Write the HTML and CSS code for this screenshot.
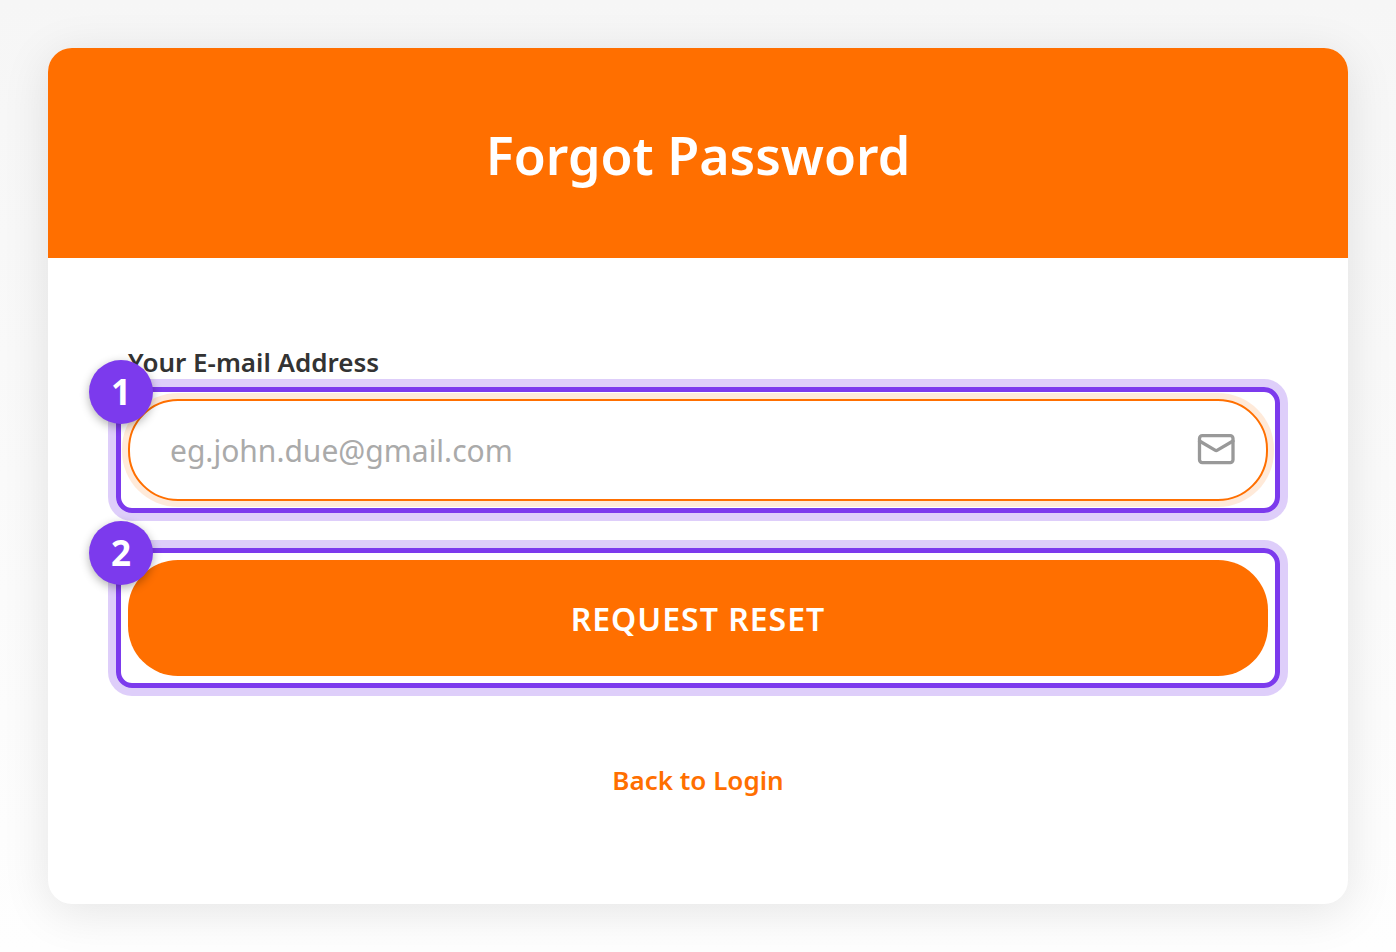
FILE: index.html
```html
<!DOCTYPE html>
<html lang="en">
<head>
    <meta charset="UTF-8">
    <meta name="viewport" content="width=device-width, initial-scale=1.0">
    <title>Forgot Password</title>
    <link rel="stylesheet" href="styles.css">
</head>
<body>
    <main class="card">
        <header class="card-header">
            <h1>Forgot Password</h1>
        </header>

        <form class="card-body">
            <label for="email">Your E-mail Address</label>
            <div class="step">
                <input type="email" id="email" name="email" placeholder="eg.john.due@gmail.com">
                <svg class="mail-icon" viewBox="0 0 40 32" fill="none" stroke="currentColor" stroke-width="3.300" stroke-linecap="round" stroke-linejoin="round" aria-hidden="true">
                    <rect x="3.500" y="2.600" width="33.500" height="27" rx="2.800"/>
                    <path d="M3.500 8 L19 17.200 Q20.200 18 21.400 17.200 L37 8"/>
                </svg>
                <div class="step-frame"><span class="step-number">1</span></div>
            </div>

            <div class="step">
                <button type="submit">REQUEST RESET</button>
                <div class="step-frame"><span class="step-number">2</span></div>
            </div>

            <a class="back-link" href="/login">Back to Login</a>
        </form>
    </main>
</body>
</html>
```
FILE: styles.css
```css
* {
    box-sizing: border-box;
}

body {
    margin: 0;
    padding: 48px;
    min-height: 100vh;
    background: linear-gradient(#f6f6f6, #fefefe);
    font-family: "Segoe UI", "Noto Sans", sans-serif;
    color: #333333;
}

.card {
    background-color: #ffffff;
    border-radius: 24px;
    overflow: hidden;
    box-shadow: 0 8px 48px rgba(0, 0, 0, 0.1);
}

.card-header {
    background-color: #ff6f00;
    color: #ffffff;
    padding: 66px 48px 62px;
    text-align: center;
}

h1 {
    margin: 0;
    font-size: 52px;
    font-weight: 600;
    line-height: 82px;
}

.card-body {
    display: flex;
    flex-direction: column;
    padding: 84px 80px 104px;
}

label {
    margin-bottom: 17px;
    font-size: 26px;
    font-weight: 600;
    line-height: 40px;
}

/* Highlighted steps */
.step {
    position: relative;
    margin-bottom: 59px;
}

.step-frame {
    position: absolute;
    inset: -12px;
    border: 5px solid #7c3aed;
    border-radius: 16px;
    box-shadow: 0 0 0 8px rgba(124, 58, 237, 0.25);
    pointer-events: none;
}

.step-number {
    position: absolute;
    top: -32px;
    left: -32px;
    width: 64px;
    height: 64px;
    border-radius: 50%;
    background-color: #7c3aed;
    color: #ffffff;
    font-size: 35px;
    font-weight: 700;
    line-height: 64px;
    text-align: center;
    box-shadow: 0 3px 10px rgba(0, 0, 0, 0.3);
}

input {
    display: block;
    width: 100%;
    height: 102px;
    padding: 0 96px 0 40px;
    border: 2px solid #ff6f00;
    border-radius: 50px;
    outline: none;
    background-color: #ffffff;
    box-shadow: 0 0 0 6px rgba(255, 111, 0, 0.15);
    font-family: inherit;
    font-size: 30px;
    color: #333333;
}

input::placeholder {
    color: #aaaaaa;
    opacity: 1;
}

.mail-icon {
    position: absolute;
    top: 34px;
    right: 32px;
    width: 40px;
    height: 32px;
    color: #999999;
}

button {
    display: block;
    width: 100%;
    height: 116px;
    border: none;
    border-radius: 50px;
    background-color: #ff6f00;
    color: #ffffff;
    font-family: inherit;
    font-size: 32px;
    font-weight: 600;
    letter-spacing: 1px;
    cursor: pointer;
}

.back-link {
    align-self: center;
    margin-top: 25px;
    font-size: 26px;
    font-weight: 600;
    line-height: 40px;
    color: #ff6f00;
    text-decoration: none;
}
```
